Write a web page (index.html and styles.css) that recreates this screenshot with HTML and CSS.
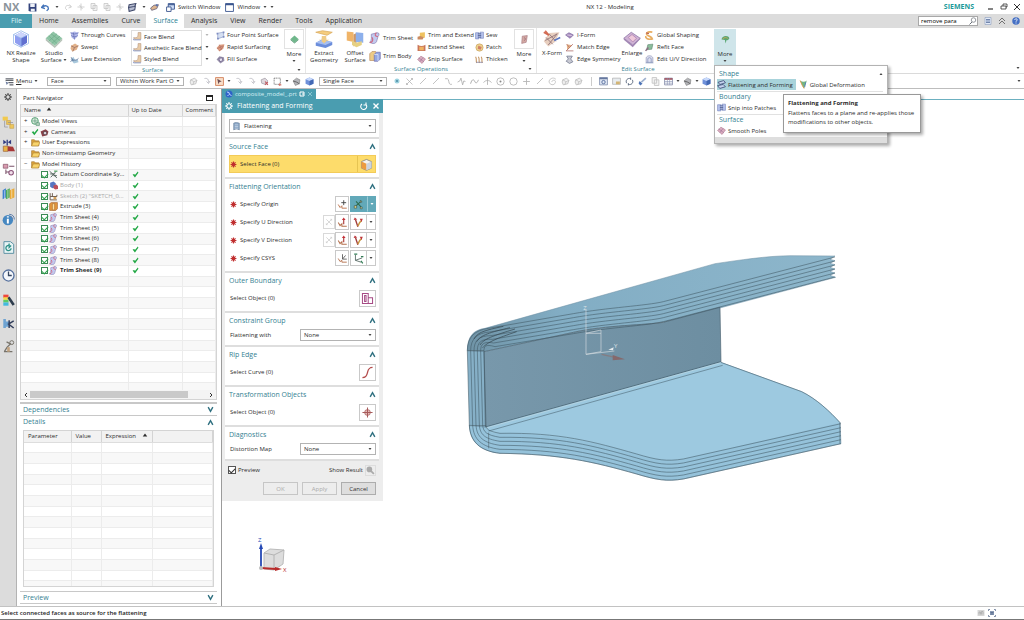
FILE: index.html
```html
<!DOCTYPE html>
<html lang="en">
<head>
<meta charset="utf-8">
<title>NX 12 - Modeling</title>
<link rel="stylesheet" href="styles.css">
</head>
<body>
<svg class="defs" aria-hidden="true">
  <symbol id="down" viewBox="0 0 8 8"><path d="M1 2h6L4 6z" fill="currentColor"/></symbol>
  <symbol id="chev-up" viewBox="0 0 12 12"><path d="M2 10L6 3l4 7" fill="none" stroke="#2f7080" stroke-width="2.4"/></symbol>
  <symbol id="chev-down" viewBox="0 0 12 12"><path d="M2 2l4 7 4-7" fill="none" stroke="#2f7080" stroke-width="2.4"/></symbol>
  <symbol id="save" viewBox="0 0 16 16"><path d="M1 1h14v14H3l-2-2z" fill="#33437c"/><path d="M4 1h8v6H4zM5 10h7v5H5z" fill="#eef1f8"/></symbol>
  <symbol id="undo" viewBox="0 0 16 16"><path d="M5 3L1 8l6 2M2 8c4-5 12-4 11 3l-3 3" fill="none" stroke="#4575ba" stroke-width="2.4"/></symbol>
  <symbol id="redo" viewBox="0 0 16 16"><path d="M11 3l4 5-6 2M14 8C10 3 2 4 3 11l3 3" fill="none" stroke="#d2d2d2" stroke-width="2"/></symbol>
  <symbol id="cut" viewBox="0 0 16 16"><path d="M8 1v14M1 8h14M5 4l6 8" fill="none" stroke="#ccc" stroke-width="1.8"/></symbol>
  <symbol id="copy" viewBox="0 0 16 16"><path d="M2 1h8v10H2zM6 5h8v10H6z" fill="#f4f4f4" stroke="#c3c3c3" stroke-width="1.5"/></symbol>
  <symbol id="stack" viewBox="0 0 16 16"><path d="M2 3l12-2-2 5L1 8zM1 8l12-2-1 6-10 3z" fill="#b7bdd1" stroke="#3d4668" stroke-width="1.8"/></symbol>
  <symbol id="touch" viewBox="0 0 16 16"><path d="M1 9l6-5 8-1-3 7-9 3z" fill="#ddb48e" stroke="#625e78" stroke-width="1.4"/><circle cx="12" cy="4" r="2" fill="#5470b0"/></symbol>
  <symbol id="switchwin" viewBox="0 0 16 16"><path d="M4 1h11v10H4z" fill="#cfdef7" stroke="#3b568f" stroke-width="1.6"/><path d="M1 7h8v8H1z" fill="#fff" stroke="#3b568f" stroke-width="1.6"/><path d="M4 2h11v2H4z" fill="#3b568f"/></symbol>
  <symbol id="win" viewBox="0 0 16 16"><path d="M1 1h14v14H1z" fill="#fff" stroke="#3b568f" stroke-width="1.6"/><path d="M1 1h14v3H1z" fill="#3b568f"/></symbol>
  <symbol id="search" viewBox="0 0 16 16"><circle cx="9" cy="6" r="4.5" fill="#fff" stroke="#6a7078" stroke-width="1.4"/><path d="M6 10l-5 5" stroke="#6a7078" stroke-width="2"/></symbol>
  <symbol id="help" viewBox="0 0 16 16"><circle cx="8" cy="8" r="7.5" fill="#4570c4"/><path d="M5.500 6c0-3.500 5.500-3 5 0-.4 1.500-2.500 1.600-2.500 3.500M8 11v2" fill="none" stroke="#fff" stroke-width="1.7"/></symbol>
  <symbol id="part" viewBox="0 0 16 16"><circle cx="8" cy="8" r="7" fill="#2f63c8"/><path d="M4 4l4 1 1 4 4 2M5 12l3-3" fill="none" stroke="#bcd4ff" stroke-width="2"/></symbol>
  <symbol id="cube" viewBox="0 0 24 24"><path d="M12 3l8 4v10l-8 5-8-5V7z" fill="#8f9df0"/><path d="M4 7l8 4 8-4-8-4z" fill="#cdd5fb"/><path d="M12 11l8-4v10l-8 5z" fill="#6170d0"/><path d="M12 1l10 5v12l-10 5-10-5V6zM2 6l10 5 10-5M12 11v12" fill="none" stroke="#92b4e8" stroke-width="1"/></symbol>
  <symbol id="mesh" viewBox="0 0 24 24"><path d="M1 14L13 24l10-10v-3L13 21 1 11z" fill="#b8c3b9"/><path d="M1 11L11 2l12 9-10 10z" fill="#8fc4a5"/><path d="M5 8l11 10M8 5l12 9M16 5L5 15M20 8L9 18" stroke="#6fae8b" stroke-width="1"/></symbol>
  <symbol id="meshp" viewBox="0 0 24 24"><path d="M1 13l12 10 10-11v-2L13 20 1 11z" fill="#a58ab6"/><path d="M1 11L11 3l12 8-10 9z" fill="#cfb2d4" stroke="#8c74a6"/><path d="M7 10l5-4 6 5-5 5z" fill="#efc9da" stroke="#a982b0"/></symbol>
  <symbol id="curves" viewBox="0 0 16 16"><path d="M1 3l7-2 7 2-2 7-5 5-5-3z" fill="#b4baea"/><path d="M1 3c5 3 9 3 14 0M2 8c4 3 8 3 12 0M6 3l2 12" fill="none" stroke="#6873b8" stroke-width="1.400"/></symbol>
  <symbol id="swept" viewBox="0 0 16 16"><path d="M2 5l7-4 6 4-3 7-8 3-3-5z" fill="#e2b28a"/><path d="M2 5l6 3 7-3M8 8l-3 7" fill="none" stroke="#9c7064" stroke-width="1.400"/></symbol>
  <symbol id="law" viewBox="0 0 16 16"><path d="M1 8l5-5 3 6 5-1 1 5-8 2z" fill="#a9c8dc"/><path d="M1 12c5-7 8 1 14-6M2 4l4 7" fill="none" stroke="#5a7298" stroke-width="1.500"/></symbol>
  <symbol id="blend" viewBox="0 0 16 16"><path d="M9 1h5v12H3l-2-3h4c4 0 4-3 4-9z" fill="#e9cba6" stroke="#b3937c"/><path d="M1 12v2h13" fill="none" stroke="#8797c6" stroke-width="1.600"/></symbol>
  <symbol id="four" viewBox="0 0 16 16"><path d="M3 4l10-2 1 8-11 4z" fill="#d5dff2" stroke="#8091bd"/><path d="M1 3h3v3H1zM12 1h3v3h-3zM12 9h3v3h-3zM2 12h3v3H2z" fill="#7e8dc2"/></symbol>
  <symbol id="rapid" viewBox="0 0 16 16"><path d="M1 9l5-6 9-1-2 8-7 5z" fill="#dc9c7e"/><path d="M2 10l11-5M6 14l7-8M6 3l4 9" stroke="#b06e66" stroke-width="1.200"/></symbol>
  <symbol id="fill" viewBox="0 0 16 16"><path d="M1 8l5-6 8 2 1 6-7 5z" fill="#9a93ac"/><path d="M5 6l6-1 1 5-5 2z" fill="#e6e2ef" stroke="#6b5e88" stroke-width="1.300"/></symbol>
  <symbol id="gem" viewBox="0 0 16 16"><path d="M1 7l7-6 7 6-7 7z" fill="#6fb78b"/><path d="M1 7l7 7 7-7v2l-7 6-7-6z" fill="#4b8d69"/></symbol>
  <symbol id="sheetp" viewBox="0 0 16 16"><path d="M4 2l9-1-2 12-8 2z" fill="#d4aaa4" stroke="#9f6f77"/><path d="M7 5c4 0 3 4 0 5" fill="none" stroke="#7e5065"/></symbol>
  <symbol id="extract" viewBox="0 0 24 24"><path d="M1 3l9-2 13 2-7 4z" fill="#f5cd7e" stroke="#d9a95c"/><path d="M9 8h6v5h4l-7 5-7-5h4z" fill="#efcb86"/><path d="M1 17l8-4 14 3v4l-9 4-13-3z" fill="#6b8ddb"/><path d="M1 17l8-4 14 3-9 4z" fill="#a5bef1"/><path d="M9 11h6v4l-3 3-3-3z" fill="#efcb86"/></symbol>
  <symbol id="offset" viewBox="0 0 24 24"><path d="M1 2l9 1v13L1 14z" fill="#f0b468"/><path d="M10 6l4-2v15l-4 3z" fill="#cf9766"/><path d="M13 3l10 1v13l-10-1z" fill="#8db0ec"/><path d="M8 14l6 3 7-2v5l-7 3-6-3z" fill="#e6d083"/></symbol>
  <symbol id="trim" viewBox="0 0 16 16"><path d="M3 3l8-2c3 0 3 3 1 5l-2 7c-1 2-4 3-6 2l-3-1c3-3 2-8 2-11z" fill="#c3caef" stroke="#8d84b5"/><path d="M10 1c-3 2-2 5 2 5M1 14c4 0 5-4 3-7" fill="none" stroke="#cf6a83" stroke-width="1.600"/></symbol>
  <symbol id="body" viewBox="0 0 16 16"><path d="M1 5l3-3h5v12H1z" fill="#edcb84" stroke="#c0956c"/><path d="M7 6l3-3h5v9l-3 3H7z" fill="#93a8e4" stroke="#7574af"/><path d="M7 6h5v9" fill="none" stroke="#dfe5fb"/></symbol>
  <symbol id="extend" viewBox="0 0 16 16"><path d="M5 3l9-1v10H5z" fill="#efc25f"/><path d="M1 10l5-1 6 2-2 4H1z" fill="#cb8b61"/></symbol>
  <symbol id="extend2" viewBox="0 0 16 16"><path d="M1 3c5 3 9 3 14 0v11H1z" fill="#c9755a"/><path d="M4 6c3 1 5 1 8 0v7H4z" fill="#efb463"/></symbol>
  <symbol id="snip" viewBox="0 0 16 16"><path d="M1 8l6-6 8 5-6 8z" fill="#dcaec0" stroke="#a7708a"/><path d="M3 5l9 7M11 4L5 12" stroke="#956c92"/></symbol>
  <symbol id="sew" viewBox="0 0 16 16"><path d="M1 3h6v11H1zM9 2h6v11H9z" fill="#b6c2ec" stroke="#6f7eba"/><path d="M5 5h6M5 8h6M5 11h6" stroke="#4a5c90" stroke-width="1.400"/></symbol>
  <symbol id="patch" viewBox="0 0 16 16"><circle cx="8" cy="8" r="6.500" fill="#eed18d" stroke="#c29955"/><path d="M6 5l6 2-2 5-5-2z" fill="#cf7f67"/></symbol>
  <symbol id="thick" viewBox="0 0 16 16"><path d="M1 3c3 5 0 7 2 11M6 3c3 5 0 7 2 11M11 3c3 5 0 7 2 11" fill="none" stroke="#c79a69" stroke-width="2"/><path d="M2 13h12" stroke="#8684a5" stroke-width="1.400"/></symbol>
  <symbol id="xform" viewBox="0 0 24 24"><path d="M1 15L8 4l14-1-6 13-9 6z" fill="#e8cfbf"/><path d="M3 14l16-9M7 20L19 5M8 5l9 10M4 10l9 9" stroke="#93767c" stroke-width="1.200"/><path d="M1 3l7 4M3 1l5 6" stroke="#d36b53" stroke-width="2"/><path d="M23 10l-8 4" stroke="#5a78c4" stroke-width="2"/></symbol>
  <symbol id="iform" viewBox="0 0 16 16"><path d="M1 7l6-4 8 4-6 6z" fill="#a689bd" stroke="#6e5c94"/><path d="M4 7l8 1" stroke="#fff"/></symbol>
  <symbol id="match" viewBox="0 0 16 16"><path d="M3 2l10 2-4 4-5 5z" fill="#e5b488"/><path d="M3 2l5 6-6 6h13M8 8l6-6" fill="none" stroke="#af6c69" stroke-width="1.400"/></symbol>
  <symbol id="symm" viewBox="0 0 16 16"><path d="M3 2h10l-3 5 4 5-6 3-6-4 4-4z" fill="#c8c9d3" stroke="#747a90" stroke-width="1.400"/></symbol>
  <symbol id="shape" viewBox="0 0 16 16"><path d="M13 2c-9-2-13 3-8 6s7 2 8 6c-8 2-12-1-12-5" fill="none" stroke="#e8ae62" stroke-width="3"/><path d="M2 3l5 2" stroke="#b85c4e" stroke-width="2"/></symbol>
  <symbol id="refit" viewBox="0 0 16 16"><path d="M5 3l9-1-2 9-9 1z" fill="#8bbd9b" stroke="#56826a"/><path d="M1 14l5-6" stroke="#8c6b83" stroke-width="2.500"/></symbol>
  <symbol id="uv" viewBox="0 0 16 16"><path d="M2 5c2-5 10-5 12 0v8H2z" fill="#dfe0f0" stroke="#8087ad"/><path d="M5 13V7c0-3 6-3 6 0v6M1 14h14" fill="none" stroke="#667bab"/></symbol>
  <symbol id="bush" viewBox="0 0 16 16"><path d="M1 8c0-7 12-9 14-2-2 0-1 4-5 3l-2 6-1-6z" fill="#58a670"/><path d="M3 7c3-3 6-3 9-1" fill="none" stroke="#d6a556" stroke-width="1.500"/></symbol>
  <symbol id="flat" viewBox="0 0 16 16"><path d="M2 4l10-3 3 4-10 3zM1 10l10-2 4 4-10 3z" fill="#c5d4ef" stroke="#3f4e78" stroke-width="1.500"/></symbol>
  <symbol id="deform" viewBox="0 0 16 16"><path d="M2 1c4 3 8 3 12 0l-3 8-2 6-3-5z" fill="#72b584"/><path d="M2 1l4 9 3 5" fill="none" stroke="#dd984a" stroke-width="1.600"/><path d="M12 4l-2 9" stroke="#4c78b7" stroke-width="1.500"/></symbol>
  <symbol id="menu" viewBox="0 0 16 16"><path d="M1 3h14M1 6h14M6 10h9M8 14h7" stroke="#62666d" stroke-width="1.800"/><path d="M1 8l5 2-3 4z" fill="#68789c"/></symbol>
  <symbol id="boxy" viewBox="0 0 16 16"><path d="M8 1l7 3v8l-7 3-7-3V4z" fill="#6f91da"/><path d="M1 4l7 3 7-3-7-3z" fill="#c9dafb"/><path d="M8 7v8l7-3V4z" fill="#4469b4"/></symbol>
  <symbol id="ghost" viewBox="0 0 16 16"><path d="M3 5l7-3 4 4-2 6-8 2-2-5zM3 5l6 3 5-2M9 8l-2 5" fill="#eee" stroke="#b8b8b8" stroke-width="1.300"/></symbol>
  <symbol id="arrow" viewBox="0 0 16 16"><path d="M3 3c6-1 8 1 8 8M7 9l4 4 3-5" fill="none" stroke="#b4b4bc" stroke-width="1.600"/></symbol>
  <symbol id="pick" viewBox="0 0 16 16"><path d="M1 1h14v14H1z" fill="#f8dfc9" stroke="#d17c54" stroke-width="1.500"/><path d="M4 3l8 5-4 1-2 4z" fill="#6d4c52"/></symbol>
  <symbol id="ghostpick" viewBox="0 0 16 16"><path d="M2 5l7-3 5 5-5 6-6-2z" fill="#ded8dd" stroke="#89828c"/><path d="M9 8l5 6M9 14l5-5" stroke="#c0585f" stroke-width="2"/></symbol>
  <symbol id="lasso" viewBox="0 0 16 16"><path d="M2 2h11v11H2z" fill="none" stroke="#666" stroke-width="1.400" stroke-dasharray="2 1"/><path d="M12 11v5M10 14h5" stroke="#d36052" stroke-width="1.400"/></symbol>
  <symbol id="dot" viewBox="0 0 16 16"><circle cx="8" cy="8" r="5" fill="#9dd2df"/><circle cx="8" cy="8" r="2" fill="#4b8ba5"/></symbol>
  <symbol id="line" viewBox="0 0 16 16"><path d="M2 14L14 2" stroke="#b5b5b5" stroke-width="1.600"/></symbol>
  <symbol id="scurve" viewBox="0 0 16 16"><path d="M2 3h4c3 0 2 10 5 10h3" fill="none" stroke="#aaa" stroke-width="1.400"/></symbol>
  <symbol id="zig" viewBox="0 0 16 16"><path d="M1 9l4-2 2-5 3 12 2-7 3 1" fill="none" stroke="#aaa" stroke-width="1.400"/></symbol>
  <symbol id="wave" viewBox="0 0 16 16"><path d="M1 12c3-10 6-8 8-3 2 3 4 1 6-4" fill="none" stroke="#999" stroke-width="1.400"/></symbol>
  <symbol id="cross" viewBox="0 0 16 16"><path d="M8 2v12M2 8h12" stroke="#b5b5b5" stroke-width="1.600"/></symbol>
  <symbol id="tee" viewBox="0 0 16 16"><path d="M8 1v13M1 10c3-5 11-5 14 0" fill="none" stroke="#aaa" stroke-width="1.400"/></symbol>
  <symbol id="circ" viewBox="0 0 16 16"><circle cx="8" cy="8" r="6.500" fill="none" stroke="#aaa" stroke-width="1.300"/></symbol>
  <symbol id="circdot" viewBox="0 0 16 16"><circle cx="8" cy="8" r="6.500" fill="none" stroke="#aaa" stroke-width="1.300"/><circle cx="8" cy="8" r="1.800" fill="#888"/></symbol>
  <symbol id="swirl" viewBox="0 0 16 16"><path d="M14 4C9-1 1 4 2 9s9 7 11 1-7-5-6-1" fill="none" stroke="#bbb" stroke-width="1.400"/></symbol>
  <symbol id="gridwin" viewBox="0 0 16 16"><path d="M1 1h14v13H1z" fill="#dfe6f3" stroke="#7483a6" stroke-width="1.300"/><path d="M1 1h14v3H1z" fill="#66789f"/><circle cx="8" cy="9" r="3" fill="none" stroke="#4c6494" stroke-width="1.500"/></symbol>
  <symbol id="page" viewBox="0 0 16 16"><path d="M2 1h12v14H2z" fill="#e3ebf8" stroke="#7b8fb5"/><path d="M4 5h8M4 8h8M4 11h8" stroke="#4c6494" stroke-width="1.500"/></symbol>
  <symbol id="pic" viewBox="0 0 16 16"><path d="M1 2h14v11H1z" fill="#e8ecef" stroke="#9c9c9c"/><path d="M7 8h7v5H7z" fill="#d3b473"/></symbol>
  <symbol id="greybox" viewBox="0 0 16 16"><path d="M1 2h14v12H1z" fill="#d6d6d6"/><path d="M4 11V6h3v5M9 11V5h3v6" fill="none" stroke="#aaa" stroke-width="1.500"/></symbol>
  <symbol id="fullscr" viewBox="0 0 16 16"><path d="M4 4h8v8H4z" fill="#8d9cb6"/><path d="M1 4V1h3M12 1h3v3M15 12v3h-3M4 15H1v-3M5 7h6M5 10h6" fill="none" stroke="#4f6284" stroke-width="1.400"/></symbol>
  <symbol id="refresh" viewBox="0 0 16 16"><path d="M3 11c-3-5 2-10 7-8M13 5c3 5-2 10-7 8M10 1v4M6 15v-4" fill="none" stroke="#5c6a80" stroke-width="1.700"/></symbol>
  <symbol id="brush" viewBox="0 0 16 16"><path d="M3 7l5 5-4 3-3-4z" fill="#4e74b6"/><path d="M6 9l8-7" stroke="#9db0cf" stroke-width="3"/></symbol>
  <symbol id="tbl" viewBox="0 0 16 16"><path d="M1 2h14v12H1z" fill="#fff" stroke="#7881a2" stroke-width="1.300"/><path d="M1 2h14v3H1z" fill="#a1525e"/><path d="M1 8h14M1 11h14M6 2v12M10 2v12" stroke="#8790b2"/></symbol>
  <symbol id="shade" viewBox="0 0 16 16"><path d="M2 7l6-5 6 3-1 7-7 3z" fill="#b5b6ba" stroke="#777"/><path d="M2 7l6 2 5 3" stroke="#555" fill="none" stroke-width="1.500"/></symbol>
  <symbol id="gear" viewBox="0 0 16 16"><circle cx="8" cy="8" r="4.500" fill="none" stroke="currentColor" stroke-width="2.400"/><path d="M8 0v3M8 13v3M0 8h3M13 8h3M2.500 2.500l2 2M11.500 11.500l2 2M2.500 13.500l2-2M11.500 4.500l2-2" stroke="currentColor" stroke-width="2"/></symbol>
  <symbol id="r1" viewBox="0 0 20 20"><path d="M1 1h8v6H1z" fill="#f1c94d"/><path d="M7 7h6v6H7zM12 13h6v6h-6z" fill="#edc65b" stroke="#c9a552"/><path d="M4 7v10h5M9 10h8" fill="none" stroke="#8a8b98"/></symbol>
  <symbol id="r2" viewBox="0 0 20 20"><path d="M2 1v7l5-3zM14 1v7L9 5z" fill="#2e3980"/><path d="M8 1v9" stroke="#2e3980" stroke-width="2"/><path d="M2 11h7v8H2z" fill="#eab344" stroke="#985b35"/><path d="M9 11l8 1 3 7H9z" fill="#a73737"/></symbol>
  <symbol id="r3" viewBox="0 0 20 20"><path d="M2 2h7v6H2z" fill="#d99cb0" stroke="#7e4860"/><path d="M11 5h8M6 10v7M6 14h5" stroke="#795269" stroke-width="1.600"/><circle cx="14" cy="15" r="3.500" fill="#f1dfea" stroke="#895277" stroke-width="1.600"/></symbol>
  <symbol id="r4" viewBox="0 0 20 20"><path d="M1 5l5-3v14l-5 3z" fill="#3b7fd0"/><path d="M6 5l6-3v14l-6 3z" fill="#4faa5a"/><path d="M12 5l7-3v14l-7 3z" fill="#e9ab3a"/><path d="M4 5v13M9 4v13M15 4v13" stroke="#fff8" stroke-width="1.400"/></symbol>
  <symbol id="r5" viewBox="0 0 20 20"><circle cx="9" cy="11" r="8" fill="#4788c1"/><path d="M9 9v7M9 5v2" stroke="#fff" stroke-width="3"/><path d="M11 2c5 0 8 3 8 8M12 5c3 0 4 2 4 5" fill="none" stroke="#5c7caa" stroke-width="1.500"/></symbol>
  <symbol id="r6" viewBox="0 0 20 20"><path d="M3 1h10l5 4v14H3z" fill="#e8f4f5" stroke="#5b91a3" stroke-width="1.500"/><path d="M14 11a4 4 0 1 1-3-4M11 4v6l3-3" fill="none" stroke="#2e9188" stroke-width="2"/></symbol>
  <symbol id="r7" viewBox="0 0 20 20"><circle cx="10" cy="10" r="8.500" fill="#f4f7fc" stroke="#56719e" stroke-width="2"/><path d="M10 4v6h5" stroke="#374761" stroke-width="2" fill="none"/></symbol>
  <symbol id="r8" viewBox="0 0 20 20"><path d="M2 1h8v5H2z" fill="#ef473c"/><path d="M2 5h8v4H2z" fill="#f5da4a"/><path d="M2 9h8v4H2z" fill="#5ccb65"/><path d="M2 13h8v5H2z" fill="#43b9df"/><path d="M10 5l8 12" stroke="#2e3d4d" stroke-width="4"/></symbol>
  <symbol id="r9" viewBox="0 0 20 20"><path d="M2 3h4v14H2zM6 7h6v8H6z" fill="#6ea3d2"/><path d="M18 6l-8 5 8 6M11 5v12" fill="none" stroke="#303d5b" stroke-width="2.200"/></symbol>
  <symbol id="r10" viewBox="0 0 20 20"><path d="M7 3l6 3-5 5-4 6M3 18h13" fill="none" stroke="#77736b" stroke-width="2"/><circle cx="15" cy="4" r="3" fill="none" stroke="#77736b" stroke-width="1.500"/><path d="M8 11h4v7H8z" fill="#c2a27f"/></symbol>
  <symbol id="views" viewBox="0 0 16 16"><circle cx="7" cy="7" r="6" fill="#d8eddc" stroke="#459467" stroke-width="1.500"/><path d="M2 7h10M7 2v10M9 10h6v5H9z" fill="#b6d2be" stroke="#47876b"/></symbol>
  <symbol id="cam" viewBox="0 0 16 16"><path d="M1 6l9-4 5 4-2 7-9 2z" fill="#884249"/><circle cx="9" cy="9" r="3" fill="#ded3da" stroke="#3d3940"/></symbol>
  <symbol id="folder" viewBox="0 0 16 16"><path d="M1 3h5l2 2h6v9H1z" fill="#d9a23c" stroke="#9e732f"/><path d="M1 14l3-7h12l-3 7z" fill="#f8d36b" stroke="#ad8033"/></symbol>
  <symbol id="datum" viewBox="0 0 16 16"><path d="M1 2l13 12M3 13L13 2M2 7h9M8 10h6" stroke="#4a5b55" stroke-width="1.600"/><path d="M9 2h6" stroke="#4aa35c" stroke-width="2"/></symbol>
  <symbol id="bodyi" viewBox="0 0 16 16"><path d="M2 3l6-2 4 3v7l-6 2-4-3z" fill="#5775c2"/><path d="M8 8l5-2 3 3v5l-5 1-3-2z" fill="#bb4e5a"/></symbol>
  <symbol id="sketch" viewBox="0 0 16 16"><path d="M2 2v12h12M2 8h12V5M6 2v6" fill="none" stroke="#6d5b4d" stroke-width="1.700"/><path d="M8 9h5v4H8z" fill="#d5a057"/></symbol>
  <symbol id="extr" viewBox="0 0 16 16"><path d="M1 3l3-2h11v11l-3 3H1z" fill="#e3963c" stroke="#9c5c2e"/><path d="M6 3h4v11H6z" fill="#ffe39d" stroke="#a36632"/></symbol>
  <symbol id="tick" viewBox="0 0 12 12"><path d="M1 6l3-1 1 2 5-6 1 2-6 8z" fill="#22a845"/></symbol>
  <symbol id="star" viewBox="0 0 12 12"><path d="M6 1v10M1 6h10M2.500 2.500l7 7M9.500 2.500l-7 7" stroke="#c02e2e" stroke-width="2"/></symbol>
  <symbol id="point" viewBox="0 0 18 18"><path d="M11 2v8M7 6h8" stroke="#444" stroke-width="1.500"/><path d="M2 9l3 5 3-3v4h8" fill="none" stroke="#c07a55" stroke-width="1.600"/></symbol>
  <symbol id="infer" viewBox="0 0 18 18"><path d="M3 13L14 3M5 4l8 9" stroke="#2c6b4d" stroke-width="1.700"/><path d="M2 11h4v4H2zM12 2l3 3-3 1zM12 13h3v3h-3z" fill="#f1e07c" stroke="#304e59"/></symbol>
  <symbol id="rev" viewBox="0 0 18 18"><path d="M3 3l12 12M15 3L3 15M12 3h3v3M3 12v3h3" stroke="#aaa" stroke-width="1.400" fill="none"/></symbol>
  <symbol id="vec" viewBox="0 0 18 18"><path d="M11 4v8" stroke="#a33" stroke-width="1.800"/><path d="M2 9l3 5 3-3v4h8" fill="none" stroke="#b5714e" stroke-width="1.700"/><path d="M8 5l3-4 3 4z" fill="#c42e36"/></symbol>
  <symbol id="vec2" viewBox="0 0 18 18"><path d="M4 4l4 12" stroke="#a03a38" stroke-width="2.200"/><path d="M8 15c1-4 3-7 6-9" fill="none" stroke="#c99842" stroke-width="2.600"/><path d="M1 5l2-4 4 3zM11 3l5 0-2 5z" fill="#bd353a"/></symbol>
  <symbol id="csys" viewBox="0 0 18 18"><path d="M9 2v8h7M9 10l5-6" fill="none" stroke="#555" stroke-width="1.400"/><path d="M2 9l3 5 3-2v3h8" fill="none" stroke="#b5714e" stroke-width="1.500"/></symbol>
  <symbol id="csys2" viewBox="0 0 18 18"><path d="M4 3v9l9 3M4 12l11-4" fill="none" stroke="#475b55" stroke-width="1.300"/><path d="M2 2h5M13 6h4M13 13l3 4" stroke="#317c54" stroke-width="2"/></symbol>
  <symbol id="face" viewBox="0 0 18 18"><path d="M2 5l7-3 7 3v9l-7 3-7-3z" fill="#f4f3ef" stroke="#777"/><path d="M2 5l7 3v9l-7-3z" fill="#ed9b3e"/><path d="M9 8l7-3v9l-7 3z" fill="#cbd4df"/></symbol>
  <symbol id="outer" viewBox="0 0 18 18"><path d="M2 2h8v14H2zM10 8h6v8h-6zM5 5h2v8H5z" fill="none" stroke="#a64b85" stroke-width="1.400"/></symbol>
  <symbol id="rip" viewBox="0 0 18 18"><path d="M2 16c11 0 3-14 14-14" fill="none" stroke="#b34a4a" stroke-width="1.700"/></symbol>
  <symbol id="target" viewBox="0 0 18 18"><circle cx="9" cy="9" r="4" fill="#e6bdb9" stroke="#a65a5a"/><path d="M9 2v14M2 9h14" stroke="#a65a5a" stroke-width="1.400"/></symbol>
  <symbol id="roll" viewBox="0 0 16 16"><path d="M3 2c3-2 7-1 10 0v12c-3-2-7-2-10 0z" fill="#8ba6c5" stroke="#5f7894"/><path d="M5 5h6M5 8h6M5 11h6" stroke="#dae6f2"/></symbol>
</svg>

<header class="titlebar">
  <span class="nx">NX</span>
  <div class="quick">
    <button aria-label="Save"><svg class="i9"><use href="#save"/></svg></button>
    <button aria-label="Undo"><svg class="i9"><use href="#undo"/></svg></button>
    <button class="thin" aria-label="Undo list"><svg class="i4"><use href="#down"/></svg></button>
    <button aria-label="Redo"><svg class="i8"><use href="#redo"/></svg></button>
    <button aria-label="Cut"><svg class="i8"><use href="#cut"/></svg></button>
    <button aria-label="Copy"><svg class="i8"><use href="#copy"/></svg></button>
    <button aria-label="Paste"><svg class="i8"><use href="#copy"/></svg></button>
    <button aria-label="Delete"><svg class="i8"><use href="#cut"/></svg></button>
    <button aria-label="Repeat"><svg class="i9"><use href="#stack"/></svg></button>
    <button class="thin" aria-label="Repeat list"><svg class="i4"><use href="#down"/></svg></button>
    <button aria-label="Touch mode"><svg class="i9"><use href="#touch"/></svg></button>
    <button class="wide"><svg class="i9"><use href="#switchwin"/></svg>Switch Window</button>
    <button class="wide"><svg class="i9"><use href="#win"/></svg>Window<svg class="i4"><use href="#down"/></svg></button>
    <button class="thin" aria-label="Customize"><svg class="i4"><use href="#down"/></svg></button>
  </div>
  <h1>NX 12 - Modeling</h1>
  <div class="brandbox">
    <span class="brand">SIEMENS</span>
    <button aria-label="Minimize"><svg class="i8" viewBox="0 0 8 8"><path d="M1 6h5" stroke="#333" stroke-width="1.200"/></svg></button>
    <button aria-label="Restore"><svg class="i8" viewBox="0 0 8 8"><path d="M1 3h5v3H1zM3 3V1h4v3H6" fill="none" stroke="#333" stroke-width=".8"/></svg></button>
    <button aria-label="Close"><svg class="i8" viewBox="0 0 8 8"><path d="M1 1l6 6M7 1L1 7" stroke="#333"/></svg></button>
  </div>
</header>

<nav class="tabs">
  <a class="file" href="#file">File</a><a href="#home">Home</a><a href="#assemblies">Assemblies</a><a href="#curve">Curve</a><a class="on" href="#surface">Surface</a><a href="#analysis">Analysis</a><a href="#view">View</a><a href="#render">Render</a><a href="#tools">Tools</a><a href="#application">Application</a>
  <div class="tabtools">
    <label class="find"><input type="text" value="remove para" aria-label="Command finder"><svg class="i8"><use href="#search"/></svg></label>
    <button aria-label="Full screen"><svg class="i8"><use href="#page"/></svg></button>
    <button aria-label="Minimize ribbon"><svg class="i8" viewBox="0 0 8 8"><path d="M1 4l3-3 3 3M1 7l3-3 3 3" fill="none" stroke="#555" stroke-width=".8"/></svg></button>
    <button aria-label="Help"><svg class="i8"><use href="#help"/></svg></button>
  </div>
</nav>

<section class="ribbon">
  <div class="group g1">
    <div class="tools">
      <button class="big w40"><svg class="i18"><use href="#cube"/></svg><span>NX Realize<br>Shape</span></button>
      <button class="big w24"><svg class="i18"><use href="#mesh"/></svg><span>Studio<br>Surface <svg class="i4"><use href="#down"/></svg></span></button>
      <div class="col c62">
        <button><svg class="i9"><use href="#curves"/></svg>Through Curves</button>
        <button><svg class="i9"><use href="#swept"/></svg>Swept</button>
        <button><svg class="i9"><use href="#law"/></svg>Law Extension</button>
      </div>
      <div class="gallery col">
        <button><svg class="i9"><use href="#blend"/></svg>Face Blend</button>
        <button><svg class="i9"><use href="#blend"/></svg>Aesthetic Face Blend</button>
        <button><svg class="i9"><use href="#blend"/></svg>Styled Blend</button>
      </div>
      <div class="col spin">
        <button class="off" aria-label="Scroll up"><svg class="i4"><use href="#down"/></svg></button>
        <button aria-label="Scroll down"><svg class="i4"><use href="#down"/></svg></button>
        <button aria-label="Expand"><svg class="i4"><use href="#down"/></svg></button>
      </div>
      <div class="col c68">
        <button><svg class="i9"><use href="#four"/></svg>Four Point Surface</button>
        <button><svg class="i9"><use href="#rapid"/></svg>Rapid Surfacing</button>
        <button><svg class="i9"><use href="#fill"/></svg>Fill Surface</button>
      </div>
      <button class="more"><span class="frame"><svg class="i9"><use href="#gem"/></svg></span>More<svg class="i4"><use href="#down"/></svg></button>
    </div>
    <footer>Surface<svg class="i4"><use href="#down"/></svg></footer>
  </div>
  <div class="group g2">
    <div class="tools">
      <button class="big w34"><svg class="i18"><use href="#extract"/></svg><span>Extract<br>Geometry</span></button>
      <button class="big w24"><svg class="i18"><use href="#offset"/></svg><span>Offset<br>Surface</span></button>
      <div class="col two c48">
        <button><svg class="i12"><use href="#trim"/></svg>Trim Sheet</button>
        <button><svg class="i12"><use href="#body"/></svg>Trim Body</button>
      </div>
      <div class="col c58">
        <button><svg class="i9"><use href="#extend"/></svg>Trim and Extend</button>
        <button><svg class="i9"><use href="#extend2"/></svg>Extend Sheet</button>
        <button><svg class="i9"><use href="#snip"/></svg>Snip Surface</button>
      </div>
      <div class="col c38">
        <button><svg class="i9"><use href="#sew"/></svg>Sew</button>
        <button><svg class="i9"><use href="#patch"/></svg>Patch</button>
        <button><svg class="i9"><use href="#thick"/></svg>Thicken</button>
      </div>
      <button class="more"><span class="frame"><svg class="i9"><use href="#sheetp"/></svg></span>More<svg class="i4"><use href="#down"/></svg></button>
    </div>
    <footer>Surface Operations<svg class="i4"><use href="#down"/></svg></footer>
  </div>
  <div class="group g3">
    <div class="tools">
      <button class="big w24"><svg class="i18"><use href="#xform"/></svg><span>X-Form</span></button>
      <div class="col c54">
        <button><svg class="i9"><use href="#iform"/></svg>I-Form</button>
        <button><svg class="i9"><use href="#match"/></svg>Match Edge</button>
        <button><svg class="i9"><use href="#symm"/></svg>Edge Symmetry</button>
      </div>
      <button class="big w24"><svg class="i18"><use href="#meshp"/></svg><span>Enlarge</span></button>
      <div class="col c68">
        <button><svg class="i9"><use href="#shape"/></svg>Global Shaping</button>
        <button><svg class="i9"><use href="#refit"/></svg>Refit Face</button>
        <button><svg class="i9"><use href="#uv"/></svg>Edit U/V Direction</button>
      </div>
      <div class="drop">
        <button class="more open"><span class="frame"><svg class="i9"><use href="#bush"/></svg></span>More<svg class="i4"><use href="#down"/></svg></button>
        <div class="flyout">
          <h2>Shape<svg class="i4 flip"><use href="#down"/></svg></h2>
          <div class="pair"><button class="hot"><svg class="i9"><use href="#flat"/></svg>Flattening and Forming</button><button><svg class="i9"><use href="#deform"/></svg>Global Deformation</button></div>
          <h2 class="ruled">Boundary</h2>
          <div class="pair"><button><svg class="i9"><use href="#sew"/></svg>Snip into Patches</button></div>
          <h2 class="ruled">Surface</h2>
          <div class="pair"><button><svg class="i9"><use href="#snip"/></svg>Smooth Poles</button></div>
          <div class="grip"></div>
          <div class="tip" role="tooltip"><b>Flattening and Forming</b><p>Flattens faces to a plane and re-applies those modifications to other objects.</p></div>
        </div>
      </div>
    </div>
    <footer>Edit Surface</footer>
  </div>
  <svg class="i4 ribbonend"><use href="#down"/></svg>
</section>

<section class="selbar">
  <button class="menu"><svg class="i9"><use href="#menu"/></svg><span><u>M</u>enu</span><svg class="i4"><use href="#down"/></svg></button>
  <span class="sel s64"><select aria-label="Type filter"><option>Face</option></select><svg class="i4"><use href="#down"/></svg></span>
  <span class="sel s68"><select aria-label="Selection scope"><option>Within Work Part O</option></select><svg class="i4"><use href="#down"/></svg></span>
  <div class="strip">
    <button aria-label="Interpart"><svg class="i9"><use href="#ghost"/></svg></button>
    <button aria-label="Previous"><svg class="i8"><use href="#arrow"/></svg></button>
    <button aria-label="Top selection"><svg class="i9"><use href="#pick"/></svg></button>
    <button class="thin" aria-label="Selection list"><svg class="i4"><use href="#down"/></svg></button>
    <button aria-label="Up one level"><svg class="i8"><use href="#arrow"/></svg></button>
    <button aria-label="Deselect"><svg class="i8"><use href="#arrow"/></svg></button>
    <button aria-label="Find in navigator"><svg class="i9"><use href="#ghostpick"/></svg></button>
    <button aria-label="Rectangle select"><svg class="i9"><use href="#lasso"/></svg></button>
    <button class="thin" aria-label="Shape list"><svg class="i4"><use href="#down"/></svg></button>
    <button aria-label="Highlight"><svg class="i9"><use href="#shade"/></svg></button>
    <button aria-label="Solid"><svg class="i9"><use href="#boxy"/></svg></button>
  </div>
  <span class="sel s68"><select aria-label="Face rule"><option>Single Face</option></select><svg class="i4"><use href="#down"/></svg></span>
  <div class="strip">
    <button aria-label="Snap point"><svg class="i8"><use href="#dot"/></svg></button>
    <button aria-label="Clear snaps"><svg class="i9"><use href="#rev"/></svg></button>
    <button aria-label="End point"><svg class="i8"><use href="#line"/></svg></button>
    <button aria-label="Mid point"><svg class="i8"><use href="#line"/></svg></button>
    <button aria-label="Control point"><svg class="i9"><use href="#scurve"/></svg></button>
    <button aria-label="Pole"><svg class="i9"><use href="#zig"/></svg></button>
    <button aria-label="Knot"><svg class="i9"><use href="#wave"/></svg></button>
    <button aria-label="Intersection"><svg class="i9"><use href="#tee"/></svg></button>
    <button aria-label="Arc center"><svg class="i9"><use href="#circdot"/></svg></button>
    <button aria-label="Quadrant"><svg class="i9"><use href="#circ"/></svg></button>
    <button aria-label="Existing point"><svg class="i9"><use href="#cross"/></svg></button>
    <button aria-label="Point on curve"><svg class="i8"><use href="#line"/></svg></button>
    <button aria-label="Tangent"><svg class="i9"><use href="#swirl"/></svg></button>
    <button aria-label="Point on face"><svg class="i9"><use href="#ghost"/></svg></button>
    <button aria-label="Grid point"><svg class="i9"><use href="#ghost"/></svg></button>
  </div>
  <div class="strip ruled-left">
    <button aria-label="Fit"><svg class="i9"><use href="#gridwin"/></svg></button>
    <button aria-label="Zoom"><svg class="i9"><use href="#pic"/></svg></button>
    <button aria-label="Rotate"><svg class="i9"><use href="#refresh"/></svg></button>
    <button aria-label="Style"><svg class="i9"><use href="#brush"/></svg></button>
    <button aria-label="Section"><svg class="i9"><use href="#copy"/></svg></button>
    <button aria-label="Layers"><svg class="i9"><use href="#tbl"/></svg></button>
    <button class="thin" aria-label="Layers list"><svg class="i4"><use href="#down"/></svg></button>
    <button aria-label="Shading"><svg class="i9"><use href="#shade"/></svg></button>
    <button class="thin" aria-label="Shading list"><svg class="i4"><use href="#down"/></svg></button>
    <button aria-label="Orient"><svg class="i9"><use href="#boxy"/></svg></button>
  </div>
  <svg class="i4 barend"><use href="#down"/></svg>
</section>

<main>
  <nav class="rail" aria-label="Resource bar">
    <button aria-label="Options"><svg class="i8"><use href="#gear"/></svg></button>
    <button aria-label="Assembly Navigator"><svg class="i13"><use href="#r1"/></svg></button>
    <button aria-label="Constraint Navigator"><svg class="i13"><use href="#r2"/></svg></button>
    <button class="on" aria-label="Part Navigator"><svg class="i13"><use href="#r3"/></svg></button>
    <button aria-label="Reuse Library"><svg class="i13"><use href="#r4"/></svg></button>
    <button class="tall" aria-label="HD3D Tools"><svg class="i13"><use href="#r5"/></svg></button>
    <button class="tall" aria-label="Web Browser"><svg class="i13"><use href="#r6"/></svg></button>
    <button class="tall" aria-label="History"><svg class="i13"><use href="#r7"/></svg></button>
    <button aria-label="System Materials"><svg class="i13"><use href="#r8"/></svg></button>
    <button aria-label="Process Studio"><svg class="i13"><use href="#r9"/></svg></button>
    <button aria-label="Roles"><svg class="i13"><use href="#r10"/></svg></button>
  </nav>

  <aside class="navigator">
    <h2 class="navhead">Part Navigator<button aria-label="Undock"></button></h2>
    <div class="tree">
      <table>
        <colgroup><col class="k1"><col class="k2"><col></colgroup>
        <thead><tr><th>Name <svg class="i6 flip"><use href="#down"/></svg></th><th>Up to Date</th><th>Comment</th></tr></thead>
        <tbody id="tree"></tbody>
      </table>
    </div>
    <div class="hscroll"><svg class="i6" viewBox="0 0 6 6"><path d="M4 1L2 3l2 2" fill="none" stroke="#333"/></svg><span><i></i></span><svg class="i6" viewBox="0 0 6 6"><path d="M2 1l2 2-2 2" fill="none" stroke="#333"/></svg></div>
    <h3 class="fold">Dependencies<svg class="i7"><use href="#chev-down"/></svg></h3>
    <h3 class="fold">Details<svg class="i7"><use href="#chev-up"/></svg></h3>
    <div class="details">
      <table>
        <colgroup><col class="d1"><col class="d2"><col class="d3"><col></colgroup>
        <thead><tr><th>Parameter</th><th>Value</th><th>Expression <svg class="i6 flip"><use href="#down"/></svg></th><th></th></tr></thead>
        <tbody id="details"></tbody>
      </table>
    </div>
    <h3 class="fold last">Preview<svg class="i7"><use href="#chev-down"/></svg></h3>
  </aside>

  <section class="work">
    <div class="doctabs"><a href="#part"><svg class="i8"><use href="#part"/></svg>composite_model_.prt<svg class="i6" viewBox="0 0 6 6"><path d="M1 1h4v4H1zM3 3h2" fill="none" stroke="#fff"/></svg><svg class="i6" viewBox="0 0 6 6"><path d="M1 1l4 4M5 1L1 5" stroke="#9bd0da" stroke-width=".8"/></svg></a></div>
    <div class="view">
      <svg class="scene" viewBox="222 100 802 506" preserveAspectRatio="xMinYMin meet">
        <defs>
          <linearGradient id="gtop" x1="0" x2="1"><stop offset="0" stop-color="#6f93a6"/><stop offset=".25" stop-color="#82adc4"/><stop offset="1" stop-color="#8db6cb"/></linearGradient>
          <linearGradient id="gweb" x1="0" x2="1"><stop offset="0" stop-color="#7898ab"/><stop offset="1" stop-color="#6d8ea1"/></linearGradient>
        </defs>
        <g transform="translate(450 245) scale(.33333)" stroke-linejoin="round">
          <path d="M52 317L58 540C60 590 90 618 150 625L350 560 200 480 102 320 170 240C90 245 52 270 52 317z" fill="#86b0c7"/>
          <path d="M52 317C52 275 70 255 105 250L795 56C870 45 950 33 1020 32L1155 33 1140 43 1155 47 1140 55 1155 59 1140 67 1155 72 1140 79 1155 84 1140 91 1157 97 700 218C580 250 470 235 370 262L102 320z" fill="url(#gtop)" stroke="#6b8ea1" stroke-width="1.500"/>
          <path d="M102 320L370 262C470 240 590 240 640 232L810 187 813 352 106 547z" fill="url(#gweb)" stroke="#4c626f" stroke-width="2"/>
          <path d="M106 547L812 352 1055 440C1100 462 1140 500 1170 533L1173 596 700 702C650 710 620 705 560 687C430 650 330 627 150 625C90 618 60 590 58 540z" fill="#95c2da" stroke="#6b8ea1" stroke-width="1.500"/>
          <path d="M106 547L812 352 1055 440C1100 462 1140 500 1170 533L700 642C650 650 620 645 560 627C430 590 330 570 125 563z" fill="#9dc9e0"/>
          <path d="M812 352L1055 440C1100 462 1140 500 1170 533V596" fill="none" stroke="#4f6b7a" stroke-width="2"/>
          <path d="M108 549L812 353" fill="none" stroke="#b3d2e1" stroke-width="3"/>
          <path d="M106 546L812 350M116 558L818 361" fill="none" stroke="#425a68" stroke-width="1.600"/>
          <g id="plies" fill="none" stroke="#3c535f" stroke-width="1.600"></g>
          <path d="M72 282C82 262 105 256 160 244M80 290C92 270 120 262 180 248M90 300C100 282 130 272 195 252M98 308C112 292 140 280 200 260" fill="none" stroke="#34454e" stroke-width="3" opacity=".7"/>
          <path d="M52 317h50M58 542h50M116 563v47" stroke="#41525c" stroke-width="1.500"/>
          <path d="M408 328V195M408 265l45-10v65l-45 8 85-10M408 265h45" fill="none" stroke="#d3dbe0" stroke-width="2"/>
          <path d="M455 328l40 9" stroke="#857d82" stroke-width="4"/><path d="M488 330l37 13-37 3z" fill="#85696c"/>
          <path d="M475 314l16-7-2 9z" fill="#e8ecee"/>
          <text x="400" y="194" class="ax">Z</text><text x="492" y="310" class="ax">Y</text>
        </g>
        <g>
          <path d="M264 553l6-4 14 1-1 14-9 6-10-1z" fill="#ddd" stroke="#bbb"/><path d="M264 553l10 2 10-5M274 555v15" fill="none" stroke="#b4b4b4"/>
          <path d="M261 567V547" stroke="#2549b5" stroke-width="1.800"/><path d="M259 549l2-6 2 6z" fill="#2549b5"/>
          <path d="M261 568l15 1" stroke="#b92c2c" stroke-width="1.800"/><path d="M275 567l7 2-7 2z" fill="#b92c2c"/>
          <circle cx="261" cy="568" r="2" fill="#bbb"/>
          <text x="258" y="542" class="axz">Z</text><text x="283" y="572" class="axx">X</text>
        </g>
      </svg>

      <form class="dialog">
        <h2><svg class="i8"><use href="#gear"/></svg><span>Flattening and Forming</span><button type="button" aria-label="Reset"><svg class="i8" viewBox="0 0 16 16"><path d="M4 4a6 6 0 1 0 8 1M12 1v5H7" fill="none" stroke="#fff" stroke-width="2.200"/></svg></button><button type="button" aria-label="Close"><svg class="i8" viewBox="0 0 16 16"><path d="M3 3l10 10M13 3L3 13" stroke="#fff" stroke-width="2.800"/></svg></button></h2>
        <section class="typebox"><span class="sel full"><svg class="i9"><use href="#roll"/></svg><select aria-label="Type"><option>Flattening</option></select><svg class="i4"><use href="#down"/></svg></span></section>
        <section>
          <h3>Source Face<svg class="i7"><use href="#chev-up"/></svg></h3>
          <div class="row hotrow"><svg class="i7"><use href="#star"/></svg><span>Select Face (0)</span><button type="button" class="clear" aria-label="Face"><svg class="i13"><use href="#face"/></svg></button></div>
        </section>
        <section>
          <h3>Flattening Orientation<svg class="i7"><use href="#chev-up"/></svg></h3>
          <div class="row"><svg class="i7"><use href="#star"/></svg><span>Specify Origin</span><button type="button" aria-label="Point dialog"><svg class="i11"><use href="#point"/></svg></button><button type="button" class="teal join" aria-label="Inferred point"><svg class="i11"><use href="#infer"/></svg></button><button type="button" class="teal arr" aria-label="Point types"><svg class="i4"><use href="#down"/></svg></button></div>
          <div class="row"><svg class="i7"><use href="#star"/></svg><span>Specify U Direction</span><button type="button" class="small" aria-label="Reverse U"><svg class="i8"><use href="#rev"/></svg></button><button type="button" aria-label="U vector dialog"><svg class="i11"><use href="#vec"/></svg></button><button type="button" class="join" aria-label="U vector"><svg class="i11"><use href="#vec2"/></svg></button><button type="button" class="arr" aria-label="U types"><svg class="i4"><use href="#down"/></svg></button></div>
          <div class="row"><svg class="i7"><use href="#star"/></svg><span>Specify V Direction</span><button type="button" class="small" aria-label="Reverse V"><svg class="i8"><use href="#rev"/></svg></button><button type="button" aria-label="V vector dialog"><svg class="i11"><use href="#vec"/></svg></button><button type="button" class="join" aria-label="V vector"><svg class="i11"><use href="#vec2"/></svg></button><button type="button" class="arr" aria-label="V types"><svg class="i4"><use href="#down"/></svg></button></div>
          <div class="row"><svg class="i7"><use href="#star"/></svg><span>Specify CSYS</span><button type="button" aria-label="CSYS dialog"><svg class="i11"><use href="#csys"/></svg></button><button type="button" class="join" aria-label="CSYS"><svg class="i11"><use href="#csys2"/></svg></button><button type="button" class="arr" aria-label="CSYS types"><svg class="i4"><use href="#down"/></svg></button></div>
        </section>
        <section>
          <h3>Outer Boundary<svg class="i7"><use href="#chev-up"/></svg></h3>
          <div class="row"><span>Select Object (0)</span><button type="button" class="pickbtn" aria-label="Boundary"><svg class="i13"><use href="#outer"/></svg></button></div>
        </section>
        <section>
          <h3>Constraint Group<svg class="i7"><use href="#chev-up"/></svg></h3>
          <div class="row short"><label for="flatwith">Flattening with</label><span class="sel s76"><select id="flatwith"><option>None</option></select><svg class="i4"><use href="#down"/></svg></span></div>
        </section>
        <section>
          <h3>Rip Edge<svg class="i7"><use href="#chev-up"/></svg></h3>
          <div class="row"><span>Select Curve (0)</span><button type="button" class="pickbtn" aria-label="Curve"><svg class="i13"><use href="#rip"/></svg></button></div>
        </section>
        <section>
          <h3>Transformation Objects<svg class="i7"><use href="#chev-up"/></svg></h3>
          <div class="row"><span>Select Object (0)</span><button type="button" class="pickbtn" aria-label="Objects"><svg class="i13"><use href="#target"/></svg></button></div>
        </section>
        <section>
          <h3>Diagnostics<svg class="i7"><use href="#chev-up"/></svg></h3>
          <div class="row short"><label for="distort">Distortion Map</label><span class="sel s76"><select id="distort"><option>None</option></select><svg class="i4"><use href="#down"/></svg></span></div>
        </section>
        <div class="foot">
          <div class="prev"><input type="checkbox" id="prev" class="tickbox" checked><label for="prev">Preview</label><span>Show Result</span><button type="button" aria-label="Show Result"><svg class="i9" viewBox="0 0 16 16"><circle cx="6" cy="6" r="5" fill="#aaa"/><path d="M9 9l5 5" stroke="#aaa" stroke-width="3"/></svg></button></div>
          <div class="acts"><button type="button" disabled>OK</button><button type="button" disabled>Apply</button><button type="button" class="cancel">Cancel</button></div>
        </div>
      </form>
    </div>
  </section>
</main>

<footer class="status"><b>Select connected faces as source for the flattening</b><span><svg class="i8"><use href="#greybox"/></svg><svg class="i8"><use href="#fullscr"/></svg></span></footer>
<script src="app.js"></script>
</body>
</html>
```

FILE: app.js
```js
// Part Navigator rows: [kind, icon, label, extra class]
const nodes = [
  ['root', 'views', 'Model Views', '+'],
  ['root', 'cam', 'Cameras', '+', true],
  ['root', 'folder', 'User Expressions', '+'],
  ['root', 'folder', 'Non-timestamp Geometry', ''],
  ['root', 'folder', 'Model History', '−'],
  ['item', 'datum', 'Datum Coordinate Sy...', ''],
  ['item', 'bodyi', 'Body (1)', 'dim'],
  ['item', 'sketch', 'Sketch (2) "SKETCH_0...', 'dim'],
  ['item', 'extr', 'Extrude (3)', '']
];
for (let n = 4; n <= 9; n++) nodes.push(['item', 'trim', `Trim Sheet (${n})`, n === 9 ? 'now' : '']);

const use = (id, cls) => `<svg class="${cls}"><use href="#${id}"/></svg>`;
const blank = (count, cols) => ('<tr>' + '<td></td>'.repeat(cols) + '</tr>').repeat(count);

document.getElementById('tree').innerHTML = nodes.map(([kind, icon, label, flag, ok]) => {
  const name = kind === 'root'
    ? `<div class="node"><i>${flag}</i>${ok ? use('tick', 'i8') : ''}${use(icon, 'i9')}<span>${label}</span></div>`
    : `<div class="node leaf ${flag}"><input type="checkbox" class="green" checked aria-label="${label.replace(/"/g, '')}">${use(icon, 'i9')}<span>${label}</span></div>`;
  return `<tr><td>${name}</td><td>${kind === 'item' ? use('tick', 'i7') : ''}</td><td></td></tr>`;
}).join('') + blank(11, 3);

document.getElementById('details').innerHTML = blank(14, 4);

// Edge line of each of the six plies, outermost first
let d = '';
for (let i = 0; i < 6; i++) {
  const x = 52 + 10 * i, b = 58 + 10 * i, t = 12 * i, u = 627 - 13 * i;
  d += `<path d="M${x} 317C${x} ${275 + 6 * i} ${75 + 6 * i} ${256 + 8 * i} ${115 + 4 * i} ${250 + 11 * i}L370 ${206 + t}C470 ${188 + t} 590 ${182 + t} 640 ${170 + t}L1155 ${36 + t}"/>`;
  d += `<path d="M${x} 317L${b} 540C${b + 2} ${590 - 7 * i} ${90 + 5 * i} ${618 - 12 * i} 150 ${625 - 12 * i}C330 ${u} 430 ${650 - t} 560 ${687 - t}C620 ${705 - t} 650 ${710 - t} 700 ${702 - t}L1173 ${596 - t}"/>`;
}
document.getElementById('plies').innerHTML = d;
```

FILE: styles.css
```css
* { box-sizing: border-box; }
html, body { height: 100%; }
body { margin: 0; display: flex; flex-direction: column; background: #fff; color: #2c2c2c; font-family: "Open Sans", "Noto Sans", sans-serif; font-size: 6px; line-height: 8px; overflow: hidden; }
h1, h2, h3, p { margin: 0; font-weight: 400; font-size: inherit; }
button { margin: 0; padding: 0; border: 0; background: none; color: inherit; font: inherit; display: flex; align-items: center; justify-content: center; white-space: nowrap; }
a { color: inherit; text-decoration: none; }
svg { flex: none; display: block; }
.defs { width: 0; height: 0; position: absolute; }
.i4 { width: 4px; height: 4px; color: #444; }
.i6 { width: 6px; height: 6px; }
.i7 { width: 7px; height: 7px; }
.i8 { width: 8px; height: 8px; }
.i9 { width: 9px; height: 9px; }
.i11 { width: 11px; height: 11px; }
.i12 { width: 12px; height: 12px; }
.i13 { width: 13px; height: 13px; }
.i18 { width: 18px; height: 18px; }
.flip { transform: rotate(180deg); }

.titlebar { display: flex; align-items: center; height: 14px; flex: none; }
.nx { width: 26px; padding-left: 3px; font: bold 11px/14px "Open Sans", sans-serif; color: #8b949b; }
.quick { display: flex; align-items: center; }
.quick button { width: 13px; }
.quick .thin { width: 9px; }
.quick .wide { width: auto; gap: 3px; margin-left: 5px; }
.titlebar h1 { flex: 1; text-align: center; }
.brandbox { display: flex; align-items: center; gap: 5px; padding-right: 3px; }
.brand { color: #1b9a9a; font: bold 7px/10px "Open Sans", sans-serif; margin-right: 8px; }

.tabs { display: flex; height: 14px; flex: none; background: #dcdcdc; font-size: 7px; line-height: 14px; }
.tabs > a { padding: 0 6px 0 7px; }
.tabs .file { background: #4a9db0; color: #d9f3f7; width: 32px; text-align: center; }
.tabs .on { background: #fff; color: #2a7f93; }
.tabtools { margin-left: auto; display: flex; align-items: center; gap: 6px; padding-right: 4px; }
.find { display: flex; align-items: center; width: 60px; height: 10px; background: #fff; border: 1px solid #a8a8a8; }
.find input { width: 100%; min-width: 0; border: 0; padding: 0 2px; font: inherit; font-size: 6px; line-height: 8px; background: none; }

.ribbon { display: flex; height: 46px; flex: none; border-bottom: 1px solid #dadada; position: relative; z-index: 5; }
.group { display: flex; flex-direction: column; border-right: 1px solid #e6e6e6; }
.g3 { border: 0; padding-left: 2px; }
.tools { display: flex; flex: 1; padding-top: 1px; }
.g1 .tools { padding-left: 1px; }
.g1 { width: 306px; }
.g2 { width: 231px; }
.g3 { width: 200px; }
.group footer { display: flex; justify-content: center; color: #357f92; line-height: 8px; height: 8px; position: relative; }
.group footer svg { position: absolute; right: 4px; top: 2px; }
.big { flex-direction: column; justify-content: flex-start; line-height: 7px; gap: 2px; padding-top: 1px; }
.big span { display: block; text-align: center; }
.big span svg { display: inline-block; }
.w40 { width: 40px; }
.w34 { width: 36px; }
.w24 { width: 26px; }
.col { display: flex; flex-direction: column; height: 36px; }
.col button { flex: 1; justify-content: flex-start; gap: 2px; }
.g3 .col button { gap: 3px; }
.c38 { width: 38px; }
.c48 { width: 48px; }
.c54 { width: 54px; }
.c58 { width: 58px; }
.c62 { width: 61px; margin-left: 3px; }
.c68 { width: 67px; }
.g3 .c68 { width: 69px; }
.g2 .c48 { margin-left: 1px; }
.gallery { width: 71px; border: 1px solid #dedede; padding-left: 1px; margin-top: 1px; }
.spin { width: 14px; }
.spin button { justify-content: center; padding-right: 4px; }
.off { opacity: .4; }
.more { width: 22px; flex-direction: column; justify-content: flex-start; height: 36px; line-height: 8px; gap: 1px; }
.frame { width: 20px; height: 20px; border: 1px solid #e2e2e2; display: grid; place-items: center; }
.open { background: #cfe5ea; }
.open .frame { border-color: transparent; }
.drop { position: relative; }
.flyout { position: absolute; left: 0; top: 36px; width: 174px; background: #fff; border: 1px solid #b3b3b3; box-shadow: 2px 2px 3px #0005; padding: 3px 4px 0 2px; }
.flyout h2 { color: #357f92; font-size: 7px; line-height: 10px; padding-left: 2px; display: flex; justify-content: space-between; align-items: center; }
.flyout .ruled { border-top: 1px solid #e1e1e1; margin-top: 1px; }
.pair { display: flex; gap: 3px; }
.pair button { height: 11px; gap: 2px; padding-right: 3px; }
.hot { background: #a8d3db; }
.grip { background: #dedede; height: 6px; margin: 1px -4px 0 -2px; }
.tip { position: absolute; left: 68px; top: 28px; width: 138px; background: #fff; border: 1px solid #999; box-shadow: 2px 2px 3px #0005; padding: 4px 0 5px 4px; line-height: 9px; }
.tip b { display: block; margin-bottom: 1px; }
.ribbonend { position: absolute; right: 4px; bottom: 3px; }

.selbar { display: flex; align-items: center; height: 15px; flex: none; padding-left: 5px; border-bottom: 1px solid #bdbdbd; }
.menu { width: 42px; gap: 2px; justify-content: flex-start; }
.sel { display: flex; align-items: center; border: 1px solid #b3b3b3; background: #fff; height: 9px; padding-right: 3px; }
.sel select { appearance: none; flex: 1; min-width: 0; border: 0; padding: 0 0 0 3px; background: none; font: inherit; color: inherit; line-height: 7px; height: 7px; }
.s64 { width: 64px; margin-right: 5px; }
.s68 { width: 68px; }
.s76 { width: 76px; }
.sel.full { width: 100%; height: 14px; padding-left: 2px; }
.strip { display: flex; align-items: center; padding: 0 3px; }
.strip button { width: 13px; }
.strip .thin { width: 6px; }
.ruled-left { border-left: 1px solid #ccc; padding-left: 5px; margin-left: 3px; }
.barend { margin-left: auto; margin-right: 3px; }

main { flex: 1; display: flex; min-height: 0; }
.rail { width: 17px; background: #dcdcdc; border-right: 1px solid #b3b3b3; display: flex; flex-direction: column; color: #444; flex: none; }
.rail button { height: 23px; }
.rail button:first-child { height: 15px; margin-bottom: 7px; }
.rail .tall { height: 28px; }
.rail .on { background: #fff; height: 25px; }

.navigator { width: 205px; flex: none; display: flex; flex-direction: column; padding: 2px 4px 0 3px; border-right: 1px solid #9b9b9b; }
.navhead { display: flex; justify-content: space-between; align-items: center; height: 13px; padding: 0 4px 0 3px; }
.navhead button { width: 7px; height: 6px; border: 1px solid #222; border-top-width: 2px; }
.tree { height: 286px; overflow: hidden; border: 1px solid #d4d4d4; border-bottom: 0; }
table { width: 100%; border-collapse: collapse; table-layout: fixed; }
.tree table { height: 289px; }
.k1 { width: 107px; }
.k2 { width: 54px; }
th, td { padding: 0; font-weight: 400; text-align: left; white-space: nowrap; border-right: 1px solid #ececec; }
th { height: 11px; padding-left: 3px; background: #f2f2f2; border-color: #d4d4d4; border-bottom: 1px solid #ddd; line-height: 9px; }
th svg { display: inline-block; margin-left: 4px; }
td { height: 10px; border-bottom: 1px solid #ececec; line-height: 7px; }
tbody tr:nth-child(even) { background: #f8f8f8; }
td > svg { margin-left: 3px; }
.node { display: flex; align-items: center; height: 9px; gap: 1px; }
.node i { width: 9px; font-style: normal; padding-left: 3px; }
.node span { padding-left: 1px; }
.leaf { padding-left: 20px; }
.dim span { color: #aaa; }
.now { font-weight: 700; }
.green { appearance: none; margin: 0; width: 7px; height: 7px; border: 1px solid #3c8a55; background: #fff; display: grid; place-items: center; }
.green::before, .tickbox::before { content: ""; width: 5px; height: 3px; border: solid #2fa04d; border-width: 0 0 1px 1px; transform: rotate(-45deg); }
.hscroll { display: flex; align-items: center; height: 10px; border: 1px solid #d4d4d4; border-top: 0; background: #f4f4f4; padding: 0 2px; }
.hscroll span { flex: 1; margin: 0 1px; }
.hscroll i { display: block; width: 89%; height: 7px; background: #c9c9c9; }
.fold { display: flex; justify-content: space-between; align-items: center; height: 13px; padding: 0 3px; font-size: 7px; color: #357f92; border-top: 1px solid #c8c8c8; }
.hscroll + .fold { margin-top: 2px; border-top-width: 2px; }
.details { flex: 1; min-height: 0; overflow: hidden; margin: 2px 3px 4px; border: 1px solid #d4d4d4; }
.details table { height: 161px; }
.d1 { width: 47px; }
.d2 { width: 30px; }
.d3 { width: 51px; }
.details th { padding-left: 4px; }
.last { border-bottom: 1px solid #c8c8c8; margin-bottom: 2px; }

.work { flex: 1; display: flex; flex-direction: column; min-width: 0; }
.doctabs { height: 11px; display: flex; border-bottom: 1px solid #6cb0c0; }
.doctabs a { display: flex; align-items: center; gap: 2px; background: #4a9db0; color: #d5eff4; padding: 0 3px; line-height: 10px; }
.view { flex: 1; position: relative; min-height: 0; }
.scene { width: 100%; height: 100%; }
.ax { font-size: 18px; fill: #dfe5e8; }
.axz { font-size: 6px; fill: #2549b5; }
.axx { font-size: 6px; fill: #b92c2c; }

.dialog { position: absolute; left: 0; top: 0; width: 161px; background: #ededed; }
.dialog h2 { display: flex; align-items: center; height: 14px; background: #4a9db0; color: #fff; padding: 0 3px; gap: 4px; font-size: 7px; margin-top: -1px; }
.dialog h2 span { flex: 1; }
.dialog > section { background: #fff; margin: 0 4px 0 3px; padding: 1px 3px 4px 4px; border-bottom: 2px solid #dedede; }
.dialog .typebox { padding-top: 6px; }
.dialog h3 { display: flex; justify-content: space-between; align-items: center; height: 13px; margin-bottom: 2px; color: #357f92; font-size: 7px; }
.row { display: flex; align-items: center; height: 18px; padding-left: 1px; }
.row > span:not(.sel), .row > label { flex: 1; }
.row > svg { margin-right: 3px; }
.row button { border: 1px solid #c9c9c9; width: 14px; height: 16px; background: #fff; }
.row .pickbtn { width: 17px; height: 17px; }
.row .join { width: 17px; margin-left: 1px; }
.row .arr { width: 9px; border-left: 0; }
.row .small { width: 12px; height: 14px; opacity: .7; }
.row .teal { background: #62a9b9; border-color: #62a9b9; }
.row .teal.arr { border-left: 1px solid #9bcbd6; }
.teal .i4 { color: #fff; }
.hotrow { background: #fddc6b; border: 1px solid #f3cb58; padding-left: 0; }
.row .clear { border: 0; border-left: 1px solid #e6c452; background: none; width: 18px; height: 16px; }
.row.short { height: 12px; }
.row .sel { height: 12px; padding-right: 3px; }
.foot { padding: 3px 7px 6px 6px; }
.prev { display: flex; align-items: center; gap: 2px; height: 12px; }
.prev span { margin-left: auto; }
.tickbox { appearance: none; margin: 0; width: 8px; height: 8px; border: 1px solid #555; background: #fff; display: grid; place-items: center; }
.tickbox::before { border-color: #333; }
.prev button { width: 11px; height: 11px; border: 1px solid #ddd; }
.acts { display: flex; justify-content: flex-end; gap: 4px; padding-top: 6px; }
.acts button { width: 35px; height: 13px; border: 1px solid #c6c6c6; color: #aaa; }
.acts .cancel { background: #dedede; border-color: #adadad; color: #333; }

.status { height: 14px; flex: none; border-top: 1px solid #c2c2c2; border-bottom: 1px solid #777; display: flex; align-items: center; justify-content: space-between; padding: 0 28px 0 1px; color: #222; }
.status b { font-weight: 600; }
.status span { display: flex; gap: 3px; }
```
